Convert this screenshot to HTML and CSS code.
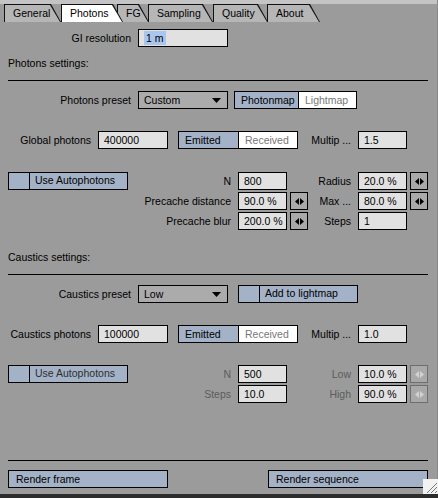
FILE: index.html
```html
<!DOCTYPE html>
<html lang="en">
<head>
<meta charset="UTF-8">
<title>Photons</title>
<link rel="stylesheet" href="styles.css">
</head>
<body>

<div class="window">
  <div class="titlebar"></div>

  <div class="tabs">
    <div class="tab t-general"><span>General</span></div>
    <div class="tab t-photons active"><span>Photons</span></div>
    <div class="tab t-fg"><span>FG</span></div>
    <div class="tab t-sampling"><span>Sampling</span></div>
    <div class="tab t-quality"><span>Quality</span></div>
    <div class="tab t-about"><span>About</span></div>
  </div>

  <div class="panel">
    <div class="row gi-row">
      <div class="label w-wide">GI resolution</div>
      <div class="field w-select"><span class="selected">1 m</span></div>
    </div>

    <div class="heading first-heading">Photons settings:</div>
    <div class="rule"></div>

    <div class="row preset-row">
      <div class="label w-wide">Photons preset</div>
      <div class="select">
        <span>Custom</span>
        <svg width="9" height="5" viewBox="0 0 9 5"><polygon points="0,0 9,0 4.5,5" fill="#000"/></svg>
      </div>
      <div class="seg seg-map">
        <span class="on">Photonmap</span>
        <span class="off">Lightmap</span>
      </div>
    </div>

    <div class="row count-row">
      <div class="label w-short">Global photons</div>
      <div class="field w-count">400000</div>
      <div class="seg seg-emit">
        <span class="on">Emitted</span>
        <span class="off">Received</span>
      </div>
      <div class="label w-mult">Multip ...</div>
      <div class="field w-num">1.5</div>
    </div>

    <div class="auto auto-photons">
      <div class="toggle"><i></i><span>Use Autophotons</span></div>
      <div class="label">N</div>
      <div class="field">800</div>
      <div></div>
      <div class="label">Radius</div>
      <div class="field">20.0 %</div>
      <div class="stepper">
        <svg width="9" height="7" viewBox="0 0 9 7"><polygon points="0,3.5 4,0 4,7"/><polygon points="5,0 9,3.5 5,7"/></svg>
      </div>

      <div class="label c2">Precache distance</div>
      <div class="field">90.0 %</div>
      <div class="stepper">
        <svg width="9" height="7" viewBox="0 0 9 7"><polygon points="0,3.5 4,0 4,7"/><polygon points="5,0 9,3.5 5,7"/></svg>
      </div>
      <div class="label">Max ...</div>
      <div class="field">80.0 %</div>
      <div class="stepper">
        <svg width="9" height="7" viewBox="0 0 9 7"><polygon points="0,3.5 4,0 4,7"/><polygon points="5,0 9,3.5 5,7"/></svg>
      </div>

      <div class="label c2">Precache blur</div>
      <div class="field">200.0 %</div>
      <div class="stepper">
        <svg width="9" height="7" viewBox="0 0 9 7"><polygon points="0,3.5 4,0 4,7"/><polygon points="5,0 9,3.5 5,7"/></svg>
      </div>
      <div class="label">Steps</div>
      <div class="field">1</div>
    </div>

    <div class="heading caustics-heading">Caustics settings:</div>
    <div class="rule"></div>

    <div class="row caustic-preset">
      <div class="label w-wide">Caustics preset</div>
      <div class="select">
        <span>Low</span>
        <svg width="9" height="5" viewBox="0 0 9 5"><polygon points="0,0 9,0 4.5,5" fill="#000"/></svg>
      </div>
      <div class="toggle add-btn"><i></i><span>Add to lightmap</span></div>
    </div>

    <div class="row count-row caustic-count">
      <div class="label w-short">Caustics photons</div>
      <div class="field w-count">100000</div>
      <div class="seg seg-emit">
        <span class="on">Emitted</span>
        <span class="off">Received</span>
      </div>
      <div class="label w-mult">Multip ...</div>
      <div class="field w-num">1.0</div>
    </div>

    <div class="auto auto-caustics">
      <div class="toggle dim"><i></i><span>Use Autophotons</span></div>
      <div class="label off-text">N</div>
      <div class="field">500</div>
      <div class="label off-text c5">Low</div>
      <div class="field">10.0 %</div>
      <div class="stepper disabled">
        <svg width="9" height="7" viewBox="0 0 9 7"><polygon points="0,3.5 4,0 4,7"/><polygon points="5,0 9,3.5 5,7"/></svg>
      </div>

      <div class="label off-text c2">Steps</div>
      <div class="field">10.0</div>
      <div class="label off-text c5">High</div>
      <div class="field">90.0 %</div>
      <div class="stepper disabled">
        <svg width="9" height="7" viewBox="0 0 9 7"><polygon points="0,3.5 4,0 4,7"/><polygon points="5,0 9,3.5 5,7"/></svg>
      </div>
    </div>

    <div class="rule bottom-rule"></div>

    <div class="render-row">
      <div class="render-btn">Render frame</div>
      <div class="render-btn">Render sequence</div>
    </div>
  </div>

  <div class="grip">
    <svg width="15" height="15" viewBox="0 0 15 15">
      <line x1="4" y1="14" x2="14" y2="4" stroke="#777"/>
      <line x1="8" y1="14" x2="14" y2="8" stroke="#777"/>
      <line x1="12" y1="14" x2="14" y2="12" stroke="#777"/>
    </svg>
  </div>
</div>

</body>
</html>
```

FILE: styles.css
```css
body {
  margin: 0;
  background-color: #2c2c2c;
  font-family: "Liberation Sans", Arial, sans-serif;
  font-size: 10.5px;
  color: #000;
}

.window {
  position: relative;
  width: 437px;
  height: 494px;
  background-color: #9b9b9b;
  border-right: 1px solid #8a8a8a;
}

.titlebar {
  height: 4px;
  background-color: #c4c4c4;
}

/* tabs */
.tabs {
  display: flex;
  height: 18px;
  padding-left: 4px;
}

.tab {
  position: relative;
  height: 18px;
  background-color: #111;
  clip-path: polygon(0 0, calc(100% - 10px) 0, 100% 100%, 0 100%);
}

.tab span {
  display: block;
  height: 17px;
  margin: 1px 0 0 1px;
  padding-left: 8px;
  line-height: 17px;
  background-color: #b6b6b6;
  clip-path: polygon(0 0, calc(100% - 11px) 0, calc(100% - 1px) 100%, 0 100%);
}

.tab.active {
  z-index: 2;
}

.tab.active span {
  background-color: #fff;
}

.t-general { width: 57px; }
.t-photons { width: 62px; }
.t-fg { width: 32px; margin-left: -6px; }
.t-sampling { width: 65px; margin-left: -1px; }
.t-quality { width: 55px; }
.t-about { width: 53px; margin-left: -1px; }

/* panel */
.panel {
  width: 420px;
  padding-left: 8px;
}

.row {
  display: flex;
  align-items: center;
  height: 18px;
}

.label {
  box-sizing: border-box;
  padding-right: 7px;
  text-align: right;
  white-space: nowrap;
}

.w-wide { width: 130px; }
.w-short { width: 90px; }
.w-mult { width: 60px; }

.field {
  box-sizing: border-box;
  height: 18px;
  padding-left: 5px;
  border: 1px solid #000;
  background-color: #e1e1e1;
  line-height: 16px;
  white-space: nowrap;
}

.w-select { width: 90px; }
.w-count { width: 70px; }
.w-num { width: 49px; }

.selected {
  background-color: #a9c6ee;
  padding: 1px 2px;
}

.select {
  box-sizing: border-box;
  display: flex;
  align-items: center;
  justify-content: space-between;
  width: 90px;
  height: 18px;
  padding: 0 6px 0 5px;
  border: 1px solid #000;
  background-color: #ababab;
}

.seg {
  box-sizing: border-box;
  display: flex;
  height: 18px;
  border: 1px solid #000;
}

.seg span {
  box-sizing: border-box;
  padding-left: 6px;
  line-height: 16px;
}

.seg .on {
  background-color: #a3b2c6;
}

.seg .off {
  flex: 1;
  border-left: 1px solid #000;
  background-color: #fff;
  color: #777;
}

.seg-map {
  width: 123px;
  margin-left: 6px;
}

.seg-map .on {
  width: 63px;
}

.seg-emit {
  width: 120px;
  margin-left: 10px;
}

.seg-emit .on {
  width: 59px;
}

.heading {
  height: 14px;
  line-height: 14px;
}

.rule {
  width: 420px;
  height: 1px;
  margin-top: 10px;
  background-color: #000;
}

.gi-row { margin-top: 7px; }
.first-heading { margin-top: 9px; }
.preset-row { margin-top: 10px; }
.count-row { margin-top: 22px; }
.auto-photons { margin-top: 23px; }
.caustics-heading { margin-top: 20px; }
.caustic-preset { margin-top: 10px; }
.caustic-count { margin-top: 22px; }
.auto-caustics { margin-top: 22px; }
.bottom-rule { margin-top: 57px; }

/* autophotons block */
.auto {
  display: grid;
  grid-template-columns: 120px 110px 49px 22px 49px 49px 22px;
  grid-auto-rows: 18px;
  row-gap: 2px;
  align-items: center;
}

.auto .field {
  width: 49px;
}

.c2 { grid-column: 2; }
.c5 { grid-column: 5; }

.off-text {
  color: #5c5c5c;
}

.toggle {
  box-sizing: border-box;
  display: flex;
  width: 120px;
  height: 18px;
  border: 1px solid #000;
  background-color: #a3b2c6;
}

.toggle i {
  width: 20px;
  border-right: 1px solid #000;
}

.toggle span {
  padding-left: 5px;
  line-height: 15px;
}

.toggle.dim span {
  color: #2e2e2e;
}

.add-btn {
  margin-left: 10px;
}

.stepper {
  box-sizing: border-box;
  display: flex;
  align-items: center;
  justify-content: center;
  width: 18px;
  height: 18px;
  margin-left: 3px;
  border: 1px solid #000;
  background-color: #a9a9a9;
}

.stepper svg {
  fill: #000;
}

.stepper.disabled {
  border-color: #6e6e6e;
}

.stepper.disabled svg {
  fill: #d2d2d2;
}

/* bottom buttons */
.render-row {
  display: flex;
  justify-content: space-between;
  width: 420px;
  margin-top: 9px;
}

.render-btn {
  box-sizing: border-box;
  width: 160px;
  height: 18px;
  padding-left: 7px;
  border: 1px solid #000;
  background-color: #a3b2c6;
  line-height: 16px;
}

.grip {
  position: absolute;
  right: -1px;
  bottom: 0;
  width: 15px;
  height: 15px;
  background-color: #f2f2f2;
}
```
